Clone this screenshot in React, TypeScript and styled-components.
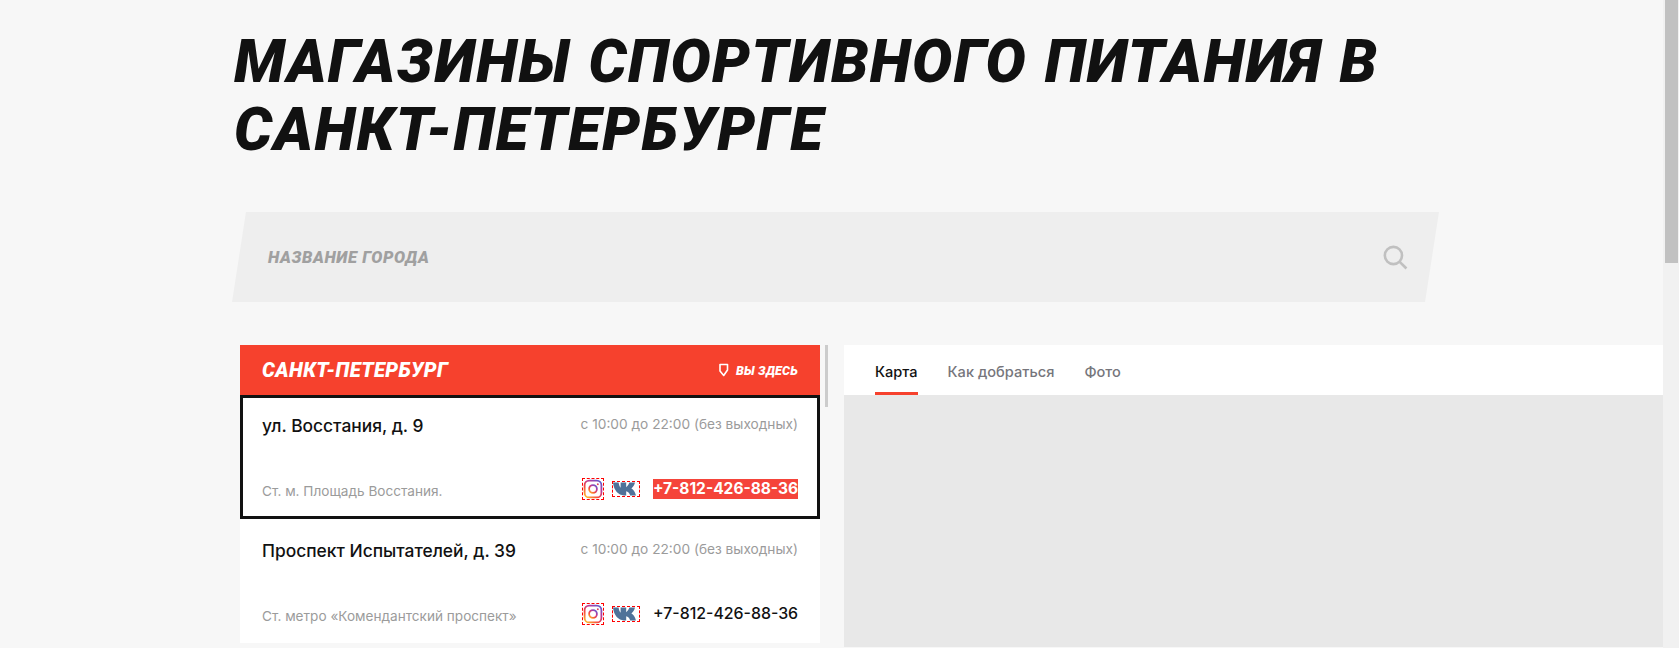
import React from "react";
import styled, { createGlobalStyle } from "styled-components";

const GlobalStyle = createGlobalStyle`
  html, body {
    margin: 0;
    padding: 0;
    background: #f7f7f7;
    overflow: hidden;
  }
  * {
    box-sizing: border-box;
  }
`;

const Page = styled.div`
  display: flex;
  width: 1679px;
  height: 648px;
  overflow: hidden;
  font-family: Inter, "Noto Sans", sans-serif;
`;

const Main = styled.main`
  flex: 1;
  min-width: 0;
  padding: 28px 0 0 232px;
`;

const PageScroll = styled.div`
  width: 16px;
  flex: none;
  background: #f1f1f1;
  padding-left: 2px;
  padding-right: 1px;

  &::before {
    content: "";
    display: block;
    height: 263px;
    background: #c1c1c1;
  }
`;

const Title = styled.h1`
  margin: 0 0 47px 2px;
  width: 1200px;
  height: 137px;
  font-family: Roboto, sans-serif;
  font-size: 60px;
  line-height: 68px;
  font-weight: 900;
  font-style: italic;
  letter-spacing: 1.35px;
  word-spacing: 1.5px;
  text-transform: uppercase;
  color: #111;
`;

const SearchBar = styled.div`
  width: 1193px;
  height: 90px;
  margin-left: 7px;
  padding: 0 24px 0 29px;
  display: flex;
  align-items: center;
  justify-content: space-between;
  background: #eee;
  transform: skewX(-8.8deg);
`;

const SearchLabel = styled.span`
  display: block;
  transform: skewX(8.8deg);
  font-family: Roboto, sans-serif;
  font-size: 16.5px;
  font-weight: 900;
  font-style: italic;
  letter-spacing: 0.6px;
  color: #a0a0a0;
`;

const SearchIcon = styled.svg`
  display: block;
  width: 25px;
  height: 25px;
  transform: skewX(8.8deg);
`;

const Columns = styled.div`
  display: flex;
  margin: 43px 0 0 8px;
  height: 302px;
`;

const ListColumn = styled.section`
  width: 580px;
  flex: none;
`;

const ListScroll = styled.div`
  width: 3px;
  height: 62px;
  margin: 0 16px 0 5px;
  flex: none;
  background: #ccc;
`;

const CityHeader = styled.header`
  height: 50px;
  padding: 0 22px;
  display: flex;
  align-items: center;
  justify-content: space-between;
  background: #f6412d;
  color: #fff;
  font-family: Roboto, sans-serif;
  font-style: italic;
  font-weight: 900;
`;

const CityName = styled.span`
  font-size: 20.2px;
  letter-spacing: 0.4px;
`;

const HereMark = styled.span`
  display: flex;
  align-items: center;
  gap: 7px;
  font-size: 12.5px;
  letter-spacing: 0.2px;
`;

const Store = styled.article<{ $active?: boolean }>`
  height: 124px;
  padding: ${(p) => (p.$active ? "16px 19px 0" : "20px 22px 0")};
  background: #fff;
  border: ${(p) => (p.$active ? "3px solid #111" : "none")};
  display: flex;
  flex-direction: column;
`;

const TopRow = styled.div`
  display: flex;
  justify-content: space-between;
  align-items: flex-start;
  height: 26px;
`;

const BottomRow = styled.div`
  display: flex;
  justify-content: space-between;
  align-items: center;
  height: 22px;
  margin-top: 38px;
`;

const Address = styled.h3`
  margin: 0;
  font-size: 17.4px;
  line-height: 24px;
  font-weight: 500;
  color: #111;
`;

const Hours = styled.span`
  font-size: 13.7px;
  line-height: 20px;
  color: #9b9b9b;
`;

const Metro = styled.span`
  margin-top: 3px;
  font-size: 13.6px;
  line-height: 20px;
  color: #9b9b9b;
`;

const Contacts = styled.div`
  display: flex;
  align-items: center;
`;

const IconLink = styled.a`
  display: block;
  outline: 1px dashed #f00;
  outline-offset: -1px;
  line-height: 0;
`;

const VkLink = styled(IconLink)`
  width: 28px;
  height: 16px;
  margin: 0 13px 0 8px;
`;

const Phone = styled.span<{ $active?: boolean }>`
  width: 145px;
  height: 20px;
  font-size: ${(p) => (p.$active ? "15.5px" : "15.9px")};
  line-height: 20px;
  text-align: center;
  white-space: nowrap;
  font-weight: ${(p) => (p.$active ? 700 : 500)};
  color: ${(p) => (p.$active ? "#fff" : "#111")};
  background: ${(p) => (p.$active ? "#f5443a" : "transparent")};
`;

const MapColumn = styled.section`
  flex: 1;
  display: flex;
  flex-direction: column;
  min-width: 0;
`;

const Tabs = styled.nav`
  height: 50px;
  padding: 0 31px;
  display: flex;
  gap: 30px;
  background: #fff;
`;

const Tab = styled.span<{ $active?: boolean }>`
  height: 50px;
  padding-top: 17px;
  font-size: 14.6px;
  line-height: 20px;
  font-weight: 500;
  color: ${(p) => (p.$active ? "#111" : "#76767c")};
  border-bottom: 3px solid ${(p) => (p.$active ? "#f6412d" : "transparent")};
`;

const MapArea = styled.div`
  flex: 1;
  background: #e8e8e8;
`;

const InstagramIcon = ({ id }: { id: string }) => (
  <svg width="22" height="22" viewBox="0 0 22 22" style={{ display: "block" }}>
    <defs>
      <linearGradient id={id} x1="0.1" y1="1" x2="0.9" y2="0">
        <stop offset="0" stopColor="#fdb92e" />
        <stop offset="0.35" stopColor="#f4463f" />
        <stop offset="0.7" stopColor="#b53aa0" />
        <stop offset="1" stopColor="#5a5fd0" />
      </linearGradient>
    </defs>
    <rect x="2.6" y="2.6" width="16.8" height="16.8" rx="4.5" fill="none" stroke={`url(#${id})`} strokeWidth="1.8" />
    <circle cx="11" cy="11" r="3.9" fill="none" stroke={`url(#${id})`} strokeWidth="1.8" />
    <circle cx="15.8" cy="6.2" r="1" fill={`url(#${id})`} />
  </svg>
);

// old wide VK mark, no tile around it
const VkIcon = () => (
  <svg width="28" height="16" viewBox="0 0 28 16" style={{ display: "block" }}>
    <path
      fill="#4f7299"
      d="M1 1.6h5.6c.3 2.2.9 4 2 5.2V1.6h5.6v4.6c1.3-.9 2.4-2.6 3.2-4.6h5.6c-.7 2.7-2 4.6-3.6 6 2 1.2 3.6 3.4 4.6 6.8h-5.8c-.8-2.4-2.2-3.8-4-4.2v4.2h-2.4C6.6 14.4 1.8 9.6 1 1.6z"
    />
  </svg>
);

const stores = [
  {
    address: "ул. Восстания, д. 9",
    metro: "Ст. м. Площадь Восстания.",
    active: true,
  },
  {
    address: "Проспект Испытателей, д. 39",
    metro: "Ст. метро «Комендантский проспект»",
    active: false,
  },
];

export default function App() {
  return (
    <Page>
      <GlobalStyle />
      <Main>
        <Title>Магазины спортивного питания в Санкт-Петербурге</Title>
        <SearchBar>
          <SearchLabel>НАЗВАНИЕ ГОРОДА</SearchLabel>
          <SearchIcon viewBox="0 0 25 25" fill="none" stroke="#c0c0c0" strokeWidth="2.6">
            <circle cx="10.5" cy="10.5" r="8.6" />
            <path d="M16.8 16.8 23.5 23.5" />
          </SearchIcon>
        </SearchBar>
        <Columns>
          <ListColumn>
            <CityHeader>
              <CityName>САНКТ-ПЕТЕРБУРГ</CityName>
              <HereMark>
                <svg width="11" height="14" viewBox="0 0 11 14" fill="none" stroke="#fff" strokeWidth="1.6">
                  <path d="M2 1.5h7.5v5.5l-3.8 5.5-3.7-4.5z" strokeLinejoin="round" />
                </svg>
                ВЫ ЗДЕСЬ
              </HereMark>
            </CityHeader>
            {stores.map((store, index) => (
              <Store $active={store.active} key={index}>
                <TopRow>
                  <Address>{store.address}</Address>
                  <Hours>с 10:00 до 22:00 (без выходных)</Hours>
                </TopRow>
                <BottomRow>
                  <Metro>{store.metro}</Metro>
                  <Contacts>
                    <IconLink>
                      <InstagramIcon id={`ig-${index}`} />
                    </IconLink>
                    <VkLink>
                      <VkIcon />
                    </VkLink>
                    <Phone $active={store.active}>+7-812-426-88-36</Phone>
                  </Contacts>
                </BottomRow>
              </Store>
            ))}
          </ListColumn>
          <ListScroll />
          <MapColumn>
            <Tabs>
              <Tab $active>Карта</Tab>
              <Tab>Как добраться</Tab>
              <Tab>Фото</Tab>
            </Tabs>
            <MapArea />
          </MapColumn>
        </Columns>
      </Main>
      <PageScroll />
    </Page>
  );
}
